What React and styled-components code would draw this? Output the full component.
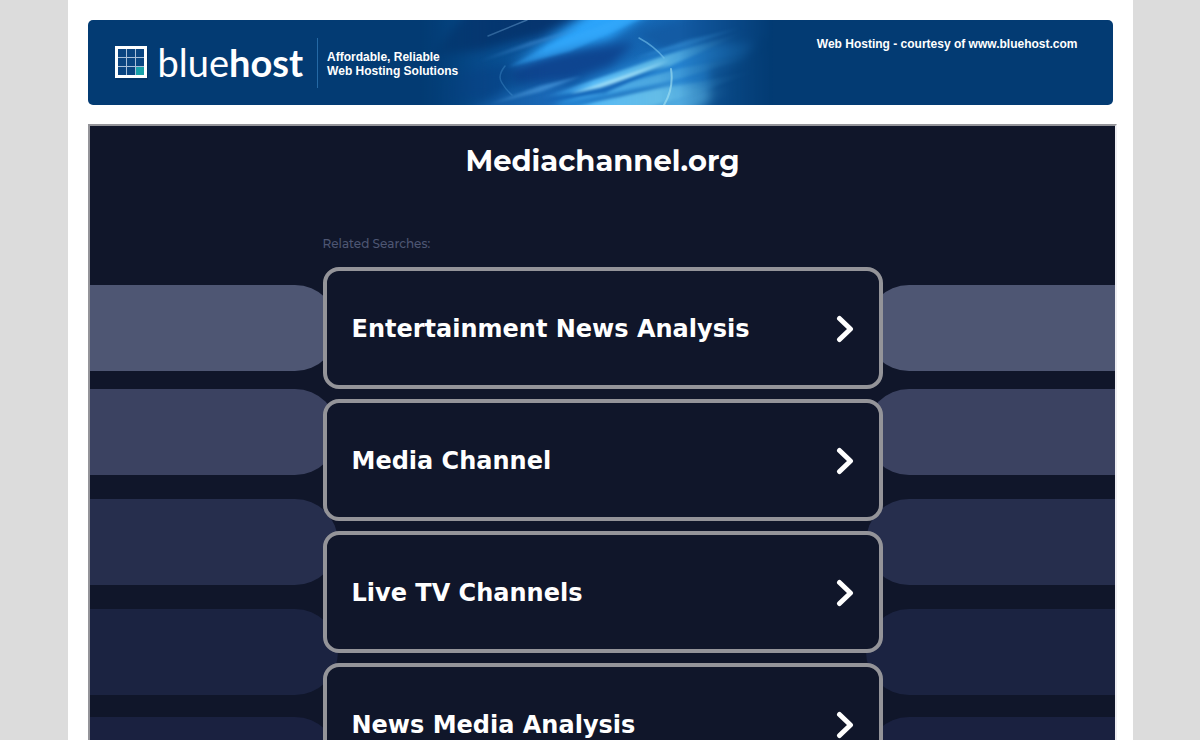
import styled, { createGlobalStyle } from 'styled-components';

const GlobalStyle = createGlobalStyle`
  * {
    box-sizing: border-box;
  }
  body {
    margin: 0;
    background: #dcdcdc;
    font-family: 'Liberation Sans', Arial, sans-serif;
  }
`;

const Page = styled.div`
  max-width: 1065px;
  min-height: 100vh;
  margin: 0 auto;
  padding: 20px;
  background: #fff;
`;

const Banner = styled.header`
  position: relative;
  display: flex;
  align-items: center;
  min-height: 85px;
  padding-left: 26px;
  border-radius: 5px;
  overflow: hidden;
  background: #033b73;
  color: #fff;
  font-size: 12px;
  font-weight: bold;
  line-height: 14px;
`;

const Rays = styled.svg`
  position: absolute;
  top: 0;
  left: 332px;
`;

const Logo = styled.a`
  position: relative;
  display: flex;
  align-items: center;
  gap: 10px;
  padding-bottom: 2px;
  color: #fff;
  text-decoration: none;
`;

const Wordmark = styled.span`
  font-family: Lato, sans-serif;
  font-size: 38px;
  font-weight: 400;
  line-height: 44px;

  b {
    font-weight: 700;
  }
`;

const Tagline = styled.p`
  position: relative;
  display: flex;
  align-items: center;
  min-height: 50px;
  margin: 0 0 0 14px;
  padding: 2px 0 0 9px;
  border-left: 1px solid #2569a5;
`;

const Courtesy = styled.a`
  position: relative;
  align-self: flex-start;
  margin: 17px 35px 0 auto;
  color: #fff;
  text-decoration: none;
`;

const Frame = styled.main`
  position: relative;
  width: calc(100% + 4px);
  margin-top: 19px;
  padding: 15px 0 40px 1px;
  overflow: hidden;
  border: 2px solid;
  border-color: #949499 #eeeef2 #eeeef2 #949499;
  background: #10162a;
`;

const Stripes = styled.div`
  position: absolute;
  top: 159px;
  left: 0;
  right: 0;
`;

const StripeRow = styled.div`
  display: flex;
  justify-content: space-between;
  margin-bottom: ${({ $gap }) => $gap}px;
`;

const Stripe = styled.span`
  width: calc(50% - 264px);
  height: 86px;
  border-radius: ${({ $side }) => ($side === 'left' ? '0 43px 43px 0' : '43px 0 0 43px')};
  background: ${({ $color }) => $color};
`;

const Title = styled.h1`
  position: relative;
  margin: 0;
  color: #fff;
  font-family: Montserrat, Inter, sans-serif;
  font-size: 29px;
  font-weight: 700;
  line-height: 40px;
  text-align: center;
`;

const Searches = styled.section`
  position: relative;
  max-width: 560px;
  margin: 53px auto 0;
`;

const SearchesTitle = styled.h2`
  margin: 0 0 13px;
  color: #4e5673;
  font-family: Montserrat, Inter, sans-serif;
  font-size: 12px;
  font-weight: 500;
  line-height: 20px;
`;

const List = styled.ul`
  display: grid;
  gap: 10px;
  margin: 0;
  padding: 0;
  list-style: none;
`;

const Card = styled.a`
  display: flex;
  align-items: center;
  justify-content: space-between;
  min-height: 122px;
  padding: 1px 25px 0;
  border: 4px solid #949499;
  border-radius: 16px;
  background: #10162a;
  color: #fff;
  font-family: Verdana, 'DejaVu Sans', sans-serif;
  font-size: 24px;
  font-weight: bold;
  line-height: 30px;
  text-decoration: none;
`;

const stripes = [
  { color: '#4e5673', gap: 18 },
  { color: '#3b4261', gap: 24 },
  { color: '#262e4d', gap: 24 },
  { color: '#1b2341', gap: 22 },
  { color: '#1a2140', gap: 24 },
];

const searches = [
  'Entertainment News Analysis',
  'Media Channel',
  'Live TV Channels',
  'News Media Analysis',
];

function BannerRays() {
  return (
    <Rays
      width="360"
      height="85"
      viewBox="0 0 360 85"
      colorInterpolationFilters="sRGB"
      aria-hidden="true"
    >
      <defs>
        <linearGradient id="fade" x1="0" x2="1" y1="0" y2="0">
          <stop offset="0" stopColor="#000" />
          <stop offset="0.15" stopColor="#999" />
          <stop offset="0.35" stopColor="#fff" />
          <stop offset="0.72" stopColor="#fff" />
          <stop offset="0.98" stopColor="#000" />
        </linearGradient>
        <mask id="edges">
          <rect width="360" height="85" fill="url(#fade)" />
        </mask>
        <linearGradient id="base" x1="0" x2="1" y1="0" y2="0">
          <stop offset="0" stopColor="#044a8a" />
          <stop offset="0.5" stopColor="#1464b2" />
          <stop offset="0.75" stopColor="#1568b4" />
          <stop offset="1" stopColor="#04437f" />
        </linearGradient>
        <linearGradient id="beam" gradientUnits="userSpaceOnUse" x1="120" x2="335" y1="0" y2="0">
          <stop offset="0" stopColor="#39a4f5" stopOpacity="0" />
          <stop offset="0.25" stopColor="#5cc0fa" />
          <stop offset="0.55" stopColor="#6cc4ea" stopOpacity="0.9" />
          <stop offset="1" stopColor="#2b86cc" stopOpacity="0" />
        </linearGradient>
        <filter id="soft" filterUnits="userSpaceOnUse" x="-30" y="-40" width="420" height="165">
          <feGaussianBlur stdDeviation="5" />
        </filter>
        <filter id="glow" filterUnits="userSpaceOnUse" x="-20" y="-20" width="400" height="125">
          <feGaussianBlur stdDeviation="1.5" />
        </filter>
      </defs>
      <g mask="url(#edges)">
        <rect width="360" height="85" fill="url(#base)" />
        <g filter="url(#soft)">
          <path d="M50 -12H170L120 16L62 30L10 36Z" fill="#06356f" />
          <path d="M40 52L95 44L80 78L20 80Z" fill="#0a4a91" />
          <path d="M92 44L150 32L215 22L190 46L150 60L92 64Z" fill="#0e4590" />
          <path d="M180 -14H240L190 18L130 34L88 48L130 20Z" fill="#2ca4fa" />
          <path d="M215 14L290 -12H370V14L250 34Z" fill="#135ba4" />
          <path d="M110 96L170 60L230 36L275 24L340 22L300 60L262 96Z" fill="#2583d0" />
          <path d="M40 96L85 72L150 62L130 96Z" fill="#1a68b6" />
          <path d="M155 98L195 76L245 64L310 70L262 98Z" fill="#4fa9df" />
          <path d="M290 46L370 26V98H290Z" fill="#0f5496" opacity="0.7" />
        </g>
        <g filter="url(#glow)">
          <path d="M120 78L180 58L250 34L330 10L250 46L180 68Z" fill="url(#beam)" opacity="0.9" />
          <path d="M150 74L190 60L250 40L190 66Z" fill="#b6ebfa" opacity="0.7" />
          <path d="M135 84L190 67L262 48L340 34L262 58L190 73Z" fill="url(#beam)" opacity="0.6" />
          <path d="M150 88L200 76L280 62L345 48L280 72L210 92Z" fill="url(#beam)" opacity="0.8" />
          <path d="M120 82L180 68L250 44L185 73Z" fill="#0d5cb2" opacity="0.8" />
          <path d="M160 84L200 73L262 61L200 77Z" fill="#1468b8" opacity="0.6" />
          <path d="M70 84L120 66L162 56L120 72Z" fill="#4a9ade" opacity="0.7" />
          <path d="M60 41L110 22L160 9L110 26Z" fill="#3b87cf" opacity="0.7" />
          <path d="M88 47L130 25L200 -2H222L150 31Z" fill="#35aafb" opacity="0.5" />
          <path d="M215 38L268 20L320 8L268 26Z" fill="#3a95dc" opacity="0.5" />
        </g>
        <g fill="none" strokeLinecap="round">
          <path d="M68 16L107 0" stroke="#7bb4e3" strokeWidth="1.5" opacity="0.5" />
          <path d="M219 18Q234 26 244 38" stroke="#78c4ef" strokeWidth="1.5" opacity="0.6" />
          <path d="M251 49Q254 68 244 85" stroke="#a7e5f4" strokeWidth="2" opacity="0.6" />
          <path d="M85 46Q77 56 82 63Q86 70 92 75" stroke="#4c9bdc" strokeWidth="1.5" opacity="0.5" />
        </g>
      </g>
    </Rays>
  );
}

function LogoMark() {
  return (
    <svg width="34" height="36" viewBox="0 0 34 36" aria-hidden="true">
      <path d="M2 4H34V36H2Z" fill="#022a58" opacity="0.5" />
      <path d="M1 2H33V34H1Z" fill="#fff" />
      <path d="M4 5H30V31H4Z" fill="#0a4480" />
      <path d="M22 23H30V31H22Z" fill="#18a0a8" />
      <path d="M12.5 5V31M21.5 5V31M4 13.5H30M4 22.5H30" stroke="#a9bfd8" fill="none" />
    </svg>
  );
}

function Chevron() {
  return (
    <svg width="18" height="28" viewBox="0 0 18 28" aria-hidden="true">
      <path
        d="M3.5 3.5L14.5 14L3.5 24.5"
        fill="none"
        stroke="#fff"
        strokeWidth="5"
        strokeLinecap="round"
        strokeLinejoin="round"
      />
    </svg>
  );
}

export default function App() {
  return (
    <>
      <GlobalStyle />
      <Page>
        <Banner>
          <BannerRays />
          <Logo href="#home">
            <LogoMark />
            <Wordmark>
              blue<b>host</b>
            </Wordmark>
          </Logo>
          <Tagline>
            Affordable, Reliable
            <br />
            Web Hosting Solutions
          </Tagline>
          <Courtesy href="#hosting">Web Hosting - courtesy of www.bluehost.com</Courtesy>
        </Banner>
        <Frame>
          <Stripes aria-hidden="true">
            {stripes.map(({ color, gap }) => (
              <StripeRow key={color} $gap={gap}>
                <Stripe $side="left" $color={color} />
                <Stripe $side="right" $color={color} />
              </StripeRow>
            ))}
          </Stripes>
          <Title>Mediachannel.org</Title>
          <Searches>
            <SearchesTitle>Related Searches:</SearchesTitle>
            <List>
              {searches.map(label => (
                <li key={label}>
                  <Card href="#search">
                    {label}
                    <Chevron />
                  </Card>
                </li>
              ))}
            </List>
          </Searches>
        </Frame>
      </Page>
    </>
  );
}
